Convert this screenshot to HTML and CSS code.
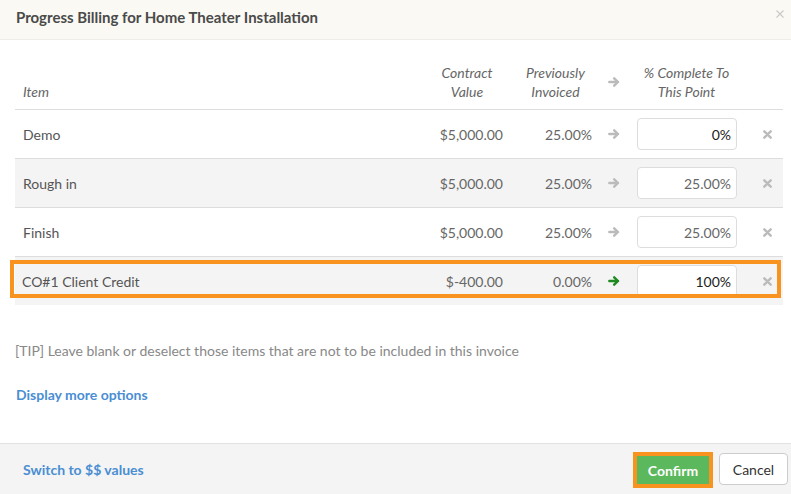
FILE: index.html
```html
<!DOCTYPE html>
<html lang="en">
  <head>
    <meta charset="UTF-8" />
    <meta name="viewport" content="width=device-width, initial-scale=1.0" />
    <title>Progress Billing</title>
    <link rel="stylesheet" href="styles.css">
  </head>

  <body>
    <div class="modal">
      <div class="modal-header">
        <h3>Progress Billing for Home Theater Installation</h3>
        <span class="close">
          <svg width="8" height="8" viewBox="0 0 8 8"><path d="M0.5 0.5L7.5 7.5M7.5 0.5L0.5 7.5" stroke="#c8c8c8" stroke-width="1.1" fill="none"/></svg>
        </span>
      </div>

      <div class="modal-body">
        <table class="billing">
          <colgroup>
            <col class="col-item">
            <col class="col-value">
            <col class="col-prev">
            <col class="col-arrow">
            <col class="col-complete">
            <col class="col-remove">
          </colgroup>
          <thead>
            <tr>
              <th class="left">Item</th>
              <th>Contract<br>Value</th>
              <th>Previously<br>Invoiced</th>
              <th class="head-arrow">
                <div class="arrow-box">
                  <svg class="arrow" width="12" height="10" viewBox="0 0 12 10"><path d="M1.3 5H10M6.2 1.3L10 5L6.2 8.7" stroke="#bbb" stroke-width="2.4" stroke-linecap="round" stroke-linejoin="round" fill="none"/></svg>
                </div>
              </th>
              <th>% Complete To<br>This Point</th>
              <th></th>
            </tr>
          </thead>
          <tbody>
            <tr>
              <td class="name">Demo</td>
              <td class="num">$5,000.00</td>
              <td class="num">25.00%</td>
              <td class="arrow-cell">
                <svg class="arrow" width="12" height="10" viewBox="0 0 12 10"><path d="M1.3 5H10M6.2 1.3L10 5L6.2 8.7" stroke="#bbb" stroke-width="2.4" stroke-linecap="round" stroke-linejoin="round" fill="none"/></svg>
              </td>
              <td class="complete"><input class="pct dark" type="text" value="0%"></td>
              <td class="remove">
                <svg width="9" height="9" viewBox="0 0 9 9"><path d="M1.3 1.3L7.7 7.7M7.7 1.3L1.3 7.7" stroke="#bbb" stroke-width="2.4" stroke-linecap="round" fill="none"/></svg>
              </td>
            </tr>
            <tr class="shaded">
              <td class="name">Rough in</td>
              <td class="num">$5,000.00</td>
              <td class="num">25.00%</td>
              <td class="arrow-cell">
                <svg class="arrow" width="12" height="10" viewBox="0 0 12 10"><path d="M1.3 5H10M6.2 1.3L10 5L6.2 8.7" stroke="#bbb" stroke-width="2.4" stroke-linecap="round" stroke-linejoin="round" fill="none"/></svg>
              </td>
              <td class="complete"><input class="pct" type="text" value="25.00%"></td>
              <td class="remove">
                <svg width="9" height="9" viewBox="0 0 9 9"><path d="M1.3 1.3L7.7 7.7M7.7 1.3L1.3 7.7" stroke="#bbb" stroke-width="2.4" stroke-linecap="round" fill="none"/></svg>
              </td>
            </tr>
            <tr>
              <td class="name">Finish</td>
              <td class="num">$5,000.00</td>
              <td class="num">25.00%</td>
              <td class="arrow-cell">
                <svg class="arrow" width="12" height="10" viewBox="0 0 12 10"><path d="M1.3 5H10M6.2 1.3L10 5L6.2 8.7" stroke="#bbb" stroke-width="2.4" stroke-linecap="round" stroke-linejoin="round" fill="none"/></svg>
              </td>
              <td class="complete"><input class="pct" type="text" value="25.00%"></td>
              <td class="remove">
                <svg width="9" height="9" viewBox="0 0 9 9"><path d="M1.3 1.3L7.7 7.7M7.7 1.3L1.3 7.7" stroke="#bbb" stroke-width="2.4" stroke-linecap="round" fill="none"/></svg>
              </td>
            </tr>
            <tr class="shaded highlight">
              <td class="name credit">CO#1 Client Credit</td>
              <td class="num">$-400.00</td>
              <td class="num">0.00%</td>
              <td class="arrow-cell">
                <svg class="arrow" width="12" height="10" viewBox="0 0 12 10"><path d="M1.3 5H10M6.2 1.3L10 5L6.2 8.7" stroke="#1f8a1f" stroke-width="2.4" stroke-linecap="round" stroke-linejoin="round" fill="none"/></svg>
              </td>
              <td class="complete"><input class="pct dark" type="text" value="100%"></td>
              <td class="remove last">
                <svg width="9" height="9" viewBox="0 0 9 9"><path d="M1.3 1.3L7.7 7.7M7.7 1.3L1.3 7.7" stroke="#bbb" stroke-width="2.4" stroke-linecap="round" fill="none"/></svg>
              </td>
            </tr>
          </tbody>
        </table>

        <p class="tip">[TIP] Leave blank or deselect those items that are not to be included in this invoice</p>
        <a class="link more" href="#">Display more options</a>
      </div>

      <div class="modal-footer">
        <a class="link" href="#">Switch to $$ values</a>
        <div class="actions">
          <button class="btn btn-confirm">Confirm</button>
          <button class="btn btn-cancel">Cancel</button>
        </div>
      </div>
    </div>
  </body>
</html>
```

FILE: styles.css
```css
body {
  margin: 0;
  font-family: "Lato", "Open Sans", sans-serif;
  font-size: 14px;
  color: #555;
  background-color: #fff;
}

.modal {
  width: 791px;
  height: 494px;
  display: flex;
  flex-direction: column;
  overflow: hidden;
}

.modal-header {
  height: 39px;
  background-color: #faf9f3;
  border-bottom: 1px solid #eeede8;
  display: flex;
  align-items: center;
  justify-content: space-between;
  padding: 0 7px 0 16px;
}

.modal-header h3 {
  margin: 0;
  font-size: 15px;
  font-weight: bold;
  color: #4a4a4a;
  padding-bottom: 6px;
}

.close {
  display: flex;
  margin-top: -12px;
}

.modal-body {
  flex: 1;
  padding: 15px 8px 0 15px;
}

.billing {
  width: 768px;
  border-collapse: collapse;
  table-layout: fixed;
}

.col-item { width: 408px; }
.col-value { width: 88px; }
.col-prev { width: 89px; }
.col-arrow { width: 28px; }
.col-complete { width: 117px; }
.col-remove { width: 38px; }

.billing th {
  font-weight: normal;
  font-style: italic;
  color: #666;
  line-height: 19px;
  padding: 8px;
  text-align: center;
  vertical-align: bottom;
  border-bottom: 1px solid #ddd;
}

.billing th.left {
  text-align: left;
}

.billing th.head-arrow {
  padding: 8px 0;
}

.arrow-box {
  height: 38px;
  display: flex;
  align-items: center;
}

.billing td {
  height: 48px;
  padding: 0 8px;
  border-bottom: 1px solid #ddd;
  vertical-align: middle;
}

.billing tr:last-child td {
  border-bottom: none;
}

.billing tr.shaded td {
  background-color: #f4f4f4;
}

.name {
  color: #555;
}

.name.credit {
  padding-left: 7px;
}

.num {
  text-align: right;
  color: #666;
}

.billing td.arrow-cell {
  padding: 0;
}

.arrow {
  display: block;
  margin-left: 8px;
}

.billing td.complete {
  padding: 0 8px 0 9px;
}

.pct {
  box-sizing: border-box;
  width: 100px;
  height: 32px;
  border: 1px solid #ddd;
  border-radius: 4px;
  background: #fff;
  font-family: inherit;
  font-size: 14px;
  text-align: right;
  padding: 0 5px 0 6px;
  color: #666;
}

.pct.dark {
  color: #222;
}

.billing td.remove {
  padding: 0 0 0 6px;
}

.remove svg {
  display: block;
  margin: 0 auto;
}

/* orange annotation box round the credit row */
.highlight td:first-child {
  position: relative;
}

.highlight td:first-child::after {
  content: "";
  position: absolute;
  left: -5px;
  top: 3px;
  width: 763px;
  height: 30px;
  border: 4px solid #f7931e;
  pointer-events: none;
}

.tip {
  margin: 36px 0 0 0;
  line-height: 20px;
  color: #888;
}

.link {
  font-weight: bold;
  color: #4a8ed3;
  text-decoration: none;
}

.more {
  display: inline-block;
  margin: 24px 0 0 1px;
  line-height: 20px;
}

.modal-footer {
  height: 50px;
  background-color: #f4f4f4;
  border-top: 1px solid #e2e2e2;
  display: flex;
  align-items: center;
  justify-content: space-between;
  padding: 0 3px 0 23px;
}

.actions {
  display: flex;
  align-items: center;
}

.btn {
  font-family: inherit;
  font-size: 14px;
  border-radius: 4px;
  cursor: pointer;
}

.btn-confirm {
  width: 80px;
  height: 36px;
  background-color: #5cb85c;
  color: #fff;
  font-weight: bold;
  border: 4px solid #f7931e;
  border-radius: 0;
  margin-top: 2px;
}

.btn-cancel {
  width: 69px;
  height: 32px;
  margin-left: 6px;
  background-color: #fff;
  border: 1px solid #ccc;
  color: #333;
}
```
